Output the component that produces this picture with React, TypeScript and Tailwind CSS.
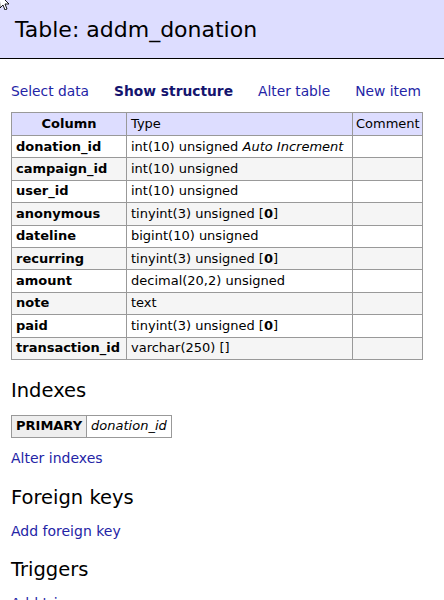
const font = "font-['Verdana','DejaVu_Sans',sans-serif]";

type Row = { name: string; type: React.ReactNode };

const rows: Row[] = [
  {
    name: "donation_id",
    type: (
      <>
        int(10) unsigned <i>Auto Increment</i>
      </>
    ),
  },
  { name: "campaign_id", type: "int(10) unsigned" },
  { name: "user_id", type: "int(10) unsigned" },
  {
    name: "anonymous",
    type: (
      <>
        tinyint(3) unsigned [<b>0</b>]
      </>
    ),
  },
  { name: "dateline", type: "bigint(10) unsigned" },
  {
    name: "recurring",
    type: (
      <>
        tinyint(3) unsigned [<b>0</b>]
      </>
    ),
  },
  { name: "amount", type: "decimal(20,2) unsigned" },
  { name: "note", type: "text" },
  {
    name: "paid",
    type: (
      <>
        tinyint(3) unsigned [<b>0</b>]
      </>
    ),
  },
  { name: "transaction_id", type: "varchar(250) []" },
];

function Cursor() {
  return (
    <svg className="absolute left-0 top-0" width="12" height="10" viewBox="0 0 12 10">
      <path d="M-1 -6 L9 4 L5 4 L7 9 L5 10 L3 5 L0 8 Z" fill="#fff" stroke="#000" strokeWidth="0.9" />
    </svg>
  );
}

export default function App() {
  return (
    <div className={`relative min-h-screen bg-white text-black ${font} text-[13px]`}>
      <Cursor />
      {/* page heading */}
      <div className="h-[59px] border-b border-black bg-[#ddf] pl-[15px] flex items-center">
        <h2 className="text-[22px] leading-none pt-[2px]">Table: addm_donation</h2>
      </div>

      <div className="px-[11px]">
        {/* links */}
        <div className="flex gap-[25px] mt-[22px] leading-[20px] text-[13.8px]">
          <a className="text-[#2424a6]">Select data</a>
          <b className="text-[#14146e]">Show structure</b>
          <a className="text-[#2424a6]">Alter table</a>
          <a className="text-[#2424a6]">New item</a>
        </div>

        {/* structure table */}
        <table className="mt-[11px] border-collapse border border-[#999] leading-[16px]">
          <thead>
            <tr className="bg-[#ddf] h-[23px]">
              <th className="w-[115px] border border-[#999] px-[4px] text-center font-bold">Column</th>
              <td className="w-[226px] border border-[#999] px-[4px]">Type</td>
              <td className="w-[70px] border border-[#999] pl-[3px] pr-0">Comment</td>
            </tr>
          </thead>
          <tbody>
            {rows.map((r, i) => (
              <tr key={r.name} className={`h-[22.4px] ${i % 2 === 1 ? "bg-[#f5f5f5]" : "bg-white"}`}>
                <th className="border border-[#999] px-[4px] text-left font-bold whitespace-nowrap">{r.name}</th>
                <td className="border border-[#999] px-[4px] whitespace-nowrap">{r.type}</td>
                <td className="border border-[#999] px-[4px]"></td>
              </tr>
            ))}
          </tbody>
        </table>

        {/* indexes */}
        <h3 className="text-[19.5px] mt-[19px] leading-[24px]">Indexes</h3>
        <table className="mt-[12px] border-collapse border border-[#999] leading-[16px]">
          <tbody>
            <tr className="h-[22px]">
              <th className="border border-[#999] bg-[#eee] px-[4px] font-bold">PRIMARY</th>
              <td className="border border-[#999] px-[4px] italic">donation_id</td>
            </tr>
          </tbody>
        </table>
        <p className="mt-[10px] leading-[20px] text-[14px]">
          <a className="text-[#2424a6]">Alter indexes</a>
        </p>

        <h3 className="text-[19.5px] mt-[18px] leading-[24px]">Foreign keys</h3>
        <p className="mt-[11px] leading-[20px] text-[14px]">
          <a className="text-[#2424a6]">Add foreign key</a>
        </p>

        <h3 className="text-[19.5px] mt-[17px] leading-[24px]">Triggers</h3>
        <p className="mt-[11px] leading-[20px] text-[14px]">
          <a className="text-[#2424a6]">Add trigger</a>
        </p>
      </div>
    </div>
  );
}
